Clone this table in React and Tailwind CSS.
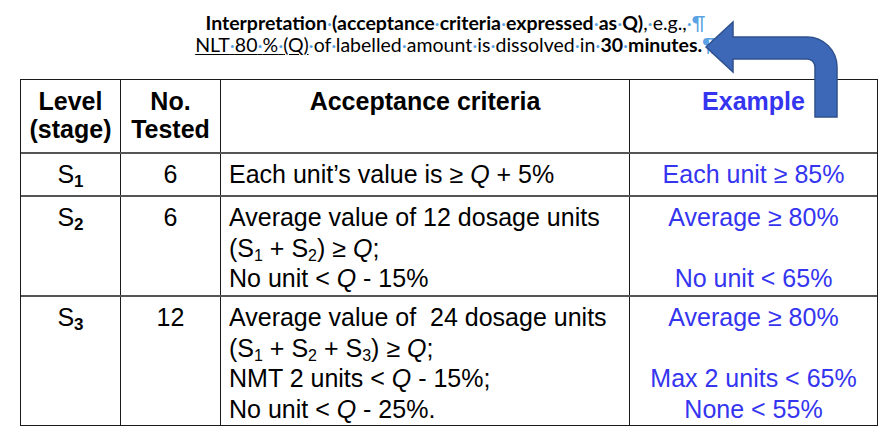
const Dot = () => <span className="text-[#5ba3e4] font-normal">·</span>;

const dotted = (words) =>
  words.flatMap((w, i) => (i === 0 ? [w] : [<Dot key={i} />, w]));

const S = ({ n, bold }) => (
  <>
    S<sub className={bold ? "text-[17px] font-bold" : "text-[16px]"}>{n}</sub>
  </>
);

const Cell = ({ children, className = "" }) => (
  <div className={`border-l border-[#1a1a1a] first:border-l-0 pt-[5px] leading-[30.5px] whitespace-nowrap ${className}`}>
    {children}
  </div>
);

const Blue = ({ children }) => <div className="text-center text-[#3535ef]">{children}</div>;

const Arrow = () => (
  <svg className="absolute left-[700px] top-[15px] z-10" width="145" height="110" viewBox="0 0 145 110">
    <path
      d="M6 32 L33 7 L33 22 L107 22 A30 30 0 0 1 137 52 L137 102 L115 102 L115 52 A8 8 0 0 0 107 44 L33 44 L33 57 Z"
      fill="#3d68b8"
      stroke="#2f528f"
      strokeWidth="1.5"
      strokeLinejoin="miter"
    />
  </svg>
);

export default function App() {
  return (
    <div className="relative w-[881px] h-[431px] bg-white overflow-hidden">
      <div className="pt-[12px] pl-[30px] text-center text-[19.5px] leading-[22px] text-black font-['Lato','Open_Sans',sans-serif]">
        <div>
          <span className="font-bold">
            {dotted(["Interpretation", "(acceptance", "criteria", "expressed", "as", "Q)"])}
          </span>
          ,<Dot />e.g.,<Dot />
          <span className="text-[#5ba3e4]">¶</span>
        </div>
        <div>
          <span className="underline underline-offset-2">{dotted(["NLT", "80", "%", "(Q)"])}</span>
          <Dot />
          {dotted(["of", "labelled", "amount", "is", "dissolved", "in"])}
          <Dot />
          <span className="font-bold">{dotted(["30", "minutes."])}</span>
          <span className="text-[#5ba3e4]">¶</span>
        </div>
      </div>

      <Arrow />

      <div className="ml-[20px] mt-[23px] w-[858px] border border-[#1a1a1a] text-[25px] text-black font-['Liberation_Sans',Arial,sans-serif]">
        <div className="grid grid-cols-[99px_100px_409px_248px] h-[72px] font-bold">
          <Cell className="text-center !leading-[28px] pt-[7px]">
            <div>Level</div>
            <div>(stage)</div>
          </Cell>
          <Cell className="text-center !leading-[28px] pt-[7px]">
            <div>No.</div>
            <div>Tested</div>
          </Cell>
          <Cell className="text-center !leading-[28px] pt-[7px]">Acceptance criteria</Cell>
          <Cell className="!leading-[28px] pt-[7px]">
            <Blue>Example</Blue>
          </Cell>
        </div>

        <div className="grid grid-cols-[99px_100px_409px_248px] h-[43px] border-t-2 border-[#555]">
          <Cell className="text-center">
            <S n="1" bold />
          </Cell>
          <Cell className="text-center">6</Cell>
          <Cell className="pl-[8px]">
            Each unit’s value is ≥ <i>Q</i> + 5%
          </Cell>
          <Cell>
            <Blue>Each unit ≥ 85%</Blue>
          </Cell>
        </div>

        <div className="grid grid-cols-[99px_100px_409px_248px] h-[100px] border-t-2 border-[#555]">
          <Cell className="text-center">
            <S n="2" bold />
          </Cell>
          <Cell className="text-center">6</Cell>
          <Cell className="pl-[8px]">
            <div>Average value of 12 dosage units</div>
            <div>
              (<S n="1" /> + <S n="2" />) ≥ <i>Q</i>;
            </div>
            <div>
              No unit &lt; <i>Q</i> - 15%
            </div>
          </Cell>
          <Cell>
            <Blue>Average ≥ 80%</Blue>
            <Blue>&nbsp;</Blue>
            <Blue>No unit &lt; 65%</Blue>
          </Cell>
        </div>

        <div className="grid grid-cols-[99px_100px_409px_248px] h-[130px] border-t-2 border-[#555]">
          <Cell className="text-center">
            <S n="3" bold />
          </Cell>
          <Cell className="text-center">12</Cell>
          <Cell className="pl-[8px]">
            <div>Average value of &nbsp;24 dosage units</div>
            <div>
              (<S n="1" /> + <S n="2" /> + <S n="3" />) ≥ <i>Q</i>;
            </div>
            <div>
              NMT 2 units &lt; <i>Q</i> - 15%;
            </div>
            <div>
              No unit &lt; <i>Q</i> - 25%.
            </div>
          </Cell>
          <Cell>
            <Blue>Average ≥ 80%</Blue>
            <Blue>&nbsp;</Blue>
            <Blue>Max 2 units &lt; 65%</Blue>
            <Blue>None &lt; 55%</Blue>
          </Cell>
        </div>
      </div>
    </div>
  );
}
